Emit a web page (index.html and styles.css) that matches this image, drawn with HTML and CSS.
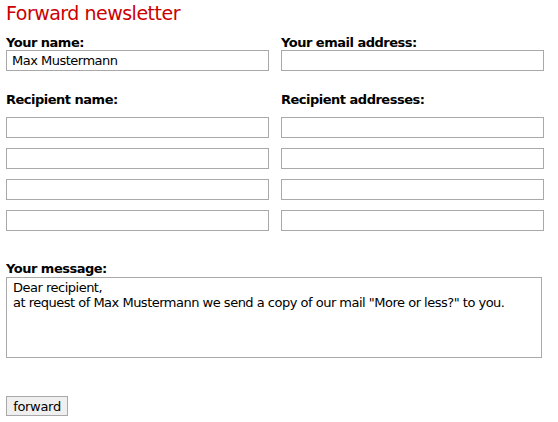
FILE: index.html
```html
<!DOCTYPE html>
<html>
<head>
<meta charset="utf-8">
<link rel="stylesheet" href="styles.css">
</head>
<body>
<form class="page">
  <h1 class="title">Forward newsletter</h1>
  <div class="grid">
    <div class="field">
      <label class="label">Your name:</label>
      <input class="input" type="text" value="Max Mustermann">
    </div>
    <div class="field">
      <label class="label">Your email address:</label>
      <input class="input" type="text" value="">
    </div>
  </div>
  <div class="grid recipients">
    <div class="col">
      <label class="label">Recipient name:</label>
      <input class="input" type="text">
      <input class="input" type="text">
      <input class="input" type="text">
      <input class="input" type="text">
    </div>
    <div class="col">
      <label class="label">Recipient addresses:</label>
      <input class="input" type="text">
      <input class="input" type="text">
      <input class="input" type="text">
      <input class="input" type="text">
    </div>
  </div>
  <div class="message">
    <label class="label">Your message:</label>
    <textarea class="textarea">Dear recipient,
at request of Max Mustermann we send a copy of our mail "More or less?" to you.</textarea>
  </div>
  <div class="actions">
    <button class="button" type="button">forward</button>
  </div>
</form>
</body>
</html>
```
FILE: styles.css
```css
html, body {
  margin: 0;
  padding: 0;
  background: #ffffff;
}
.page {
  padding: 2px 6px 0 6px;
  font-family: "DejaVu Sans", Verdana, sans-serif;
  font-size: 13px;
  letter-spacing: -0.5px;
  color: #000;
}
.title {
  margin: 0;
  font-size: 19px;
  font-weight: normal;
  line-height: 22px;
  letter-spacing: -0.5px;
  color: #cc0000;
}
.grid {
  display: grid;
  grid-template-columns: 263px 263px;
  column-gap: 12px;
  margin-top: 11px;
}
.field, .col {
  display: flex;
  flex-direction: column;
}
.label {
  font-weight: bold;
  font-size: 13px;
  line-height: 15px;
  display: block;
}
.input {
  box-sizing: border-box;
  width: 263px;
  height: 21px;
  margin: 0;
  border: 1px solid #a9a9a9;
  padding: 0 5px;
  font-family: "DejaVu Sans", Verdana, sans-serif;
  font-size: 13px;
  letter-spacing: -0.5px;
  color: #000;
  background: #fff;
}
.recipients {
  margin-top: 21px;
}
.recipients .label {
  margin-bottom: 10px;
}
.recipients .input {
  margin-bottom: 10px;
}
.message {
  margin-top: 20px;
  display: flex;
  flex-direction: column;
}
.message .label {
  margin-bottom: 1px;
}
.textarea {
  box-sizing: border-box;
  width: 536px;
  height: 81px;
  margin: 0;
  border: 1px solid #a9a9a9;
  padding: 2px 6px;
  font-family: "DejaVu Sans", Verdana, sans-serif;
  font-size: 13px;
  line-height: 15px;
  letter-spacing: -0.5px;
  resize: none;
  color: #000;
}
.actions {
  margin-top: 38px;
}
.button {
  box-sizing: border-box;
  height: 20px;
  width: 62px;
  padding: 0;
  border: 1px solid #a9a9a9;
  background: #efefef;
  font-family: "DejaVu Sans", Verdana, sans-serif;
  font-size: 13px;
  letter-spacing: -0.3px;
  color: #000;
  border-radius: 0;
}
```
